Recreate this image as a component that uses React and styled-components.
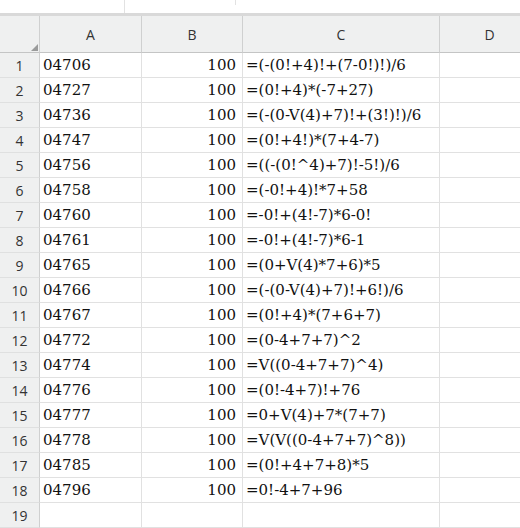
import React from "react";
import styled, { createGlobalStyle } from "styled-components";

const Global = createGlobalStyle`
  html, body { margin: 0; padding: 0; background: #fff; overflow: hidden; }
  body { width: 520px; height: 528px; }
`;

const Page = styled.div`
  width: 520px;
  height: 528px;
  overflow: hidden;
  display: flex;
  flex-direction: column;
`;

const TopBar = styled.div`
  height: 13px;
  display: grid;
  grid-template-columns: 125px 111px 1fr;
  border-bottom: 3px solid #d9d9d9;
`;

const TopSlot = styled.div`
  border-right: ${(p) => (p.$line ? "1px solid #e2e2e2" : "none")};
  height: ${(p) => p.$h || 13}px;
`;

const Grid = styled.div`
  display: grid;
  grid-template-columns: 40px 102px 101px 197px 100px;
  grid-auto-rows: 25px;
  grid-template-rows: 37px;
  width: 540px;
`;

const HeadCell = styled.div`
  position: relative;
  background: #eff0f0;
  border-right: 1px solid #cfd0d0;
  border-bottom: 1px solid #c4c5c5;
  display: flex;
  align-items: center;
  justify-content: center;
  font-family: "Open Sans", "Noto Sans", sans-serif;
  font-size: 14px;
  color: #333;
  box-sizing: border-box;
`;

const Corner = styled.div`
  position: absolute;
  right: 1px;
  bottom: 1px;
  width: 0;
  height: 0;
  border-left: 7px solid transparent;
  border-bottom: 7px solid #9a9b9b;
`;

const RowNum = styled.div`
  background: #eff0f0;
  border-right: 1px solid #cfd0d0;
  border-bottom: 1px solid #dfe0e0;
  display: flex;
  align-items: center;
  justify-content: center;
  font-family: "Open Sans", "Noto Sans", sans-serif;
  font-size: 14px;
  color: #333;
  box-sizing: border-box;
`;

const Cell = styled.div`
  border-right: 1px solid #e1e1e1;
  border-bottom: 1px solid #e1e1e1;
  display: flex;
  align-items: center;
  justify-content: ${(p) => (p.$right ? "flex-end" : "flex-start")};
  padding: ${(p) => (p.$right ? "0 6px 0 0" : "0 0 0 3px")};
  font-family: "DejaVu Serif", "Liberation Serif", serif;
  font-size: 15px;
  color: #111;
  white-space: nowrap;
  overflow: visible;
  box-sizing: border-box;
`;

const rows = [
  ["04706", "=(-(0!+4)!+(7-0!)!)/6"],
  ["04727", "=(0!+4)*(-7+27)"],
  ["04736", "=(-(0-V(4)+7)!+(3!)!)/6"],
  ["04747", "=(0!+4!)*(7+4-7)"],
  ["04756", "=((-(0!^4)+7)!-5!)/6"],
  ["04758", "=(-0!+4)!*7+58"],
  ["04760", "=-0!+(4!-7)*6-0!"],
  ["04761", "=-0!+(4!-7)*6-1"],
  ["04765", "=(0+V(4)*7+6)*5"],
  ["04766", "=(-(0-V(4)+7)!+6!)/6"],
  ["04767", "=(0!+4)*(7+6+7)"],
  ["04772", "=(0-4+7+7)^2"],
  ["04774", "=V((0-4+7+7)^4)"],
  ["04776", "=(0!-4+7)!+76"],
  ["04777", "=0+V(4)+7*(7+7)"],
  ["04778", "=V(V((0-4+7+7)^8))"],
  ["04785", "=(0!+4+7+8)*5"],
  ["04796", "=0!-4+7+96"],
];

export default function App() {
  return (
    <Page>
      <Global />
      <TopBar>
        <TopSlot $line />
        <TopSlot $line $h={5} />
        <TopSlot />
      </TopBar>
      <Grid>
        <HeadCell>
          <Corner />
        </HeadCell>
        <HeadCell>A</HeadCell>
        <HeadCell>B</HeadCell>
        <HeadCell>C</HeadCell>
        <HeadCell>D</HeadCell>
        {rows.map(([a, c], i) => (
          <React.Fragment key={i}>
            <RowNum>{i + 1}</RowNum>
            <Cell>{a}</Cell>
            <Cell $right>100</Cell>
            <Cell>{c}</Cell>
            <Cell />
          </React.Fragment>
        ))}
        <RowNum>19</RowNum>
        <Cell />
        <Cell />
        <Cell />
        <Cell />
      </Grid>
    </Page>
  );
}
